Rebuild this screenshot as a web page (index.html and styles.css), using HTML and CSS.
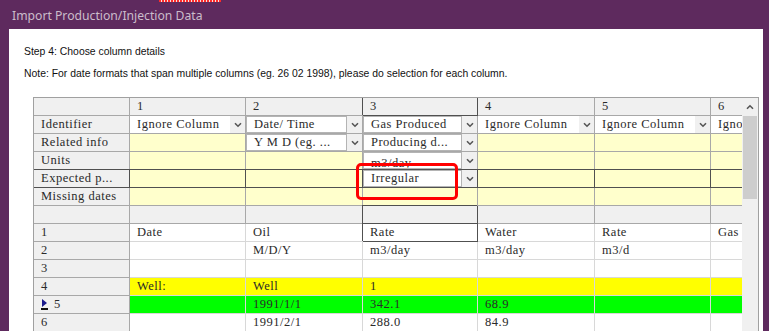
FILE: index.html
```html
<!DOCTYPE html>
<html lang="en">
<head>
  <meta charset="UTF-8">
  <title>Import Production/Injection Data</title>
  <link rel="stylesheet" href="styles.css">
</head>
<body>
  <div class="window">
    <div class="drag-mark"></div>
    <div class="titlebar">Import Production/Injection Data</div>
    <div class="panel">
      <div class="step">Step 4: Choose column details</div>
      <div class="note">Note: For date formats that span multiple columns (eg. 26 02 1998), please do selection for each column.</div>

      <div class="sheet">
        <div class="view">
          <div class="grid">
            <!-- column numbers -->
            <div class="c h"></div>
            <div class="c h">1</div>
            <div class="c h">2</div>
            <div class="c h s">3</div>
            <div class="c h">4</div>
            <div class="c h">5</div>
            <div class="c h">6</div>

            <!-- identifier -->
            <div class="c h">Identifier</div>
            <div class="c w dd"><span class="dd-box">Ignore Column</span><span class="dd-btn"><svg width="8" height="6" viewBox="0 0 8 6"><path d="M1 1.2 L4 4.2 L7 1.2" fill="none" stroke="#555" stroke-width="1.6"/></svg></span></div>
            <div class="c w dd"><span class="dd-box framed">Date/ Time</span><span class="dd-btn"><svg width="8" height="6" viewBox="0 0 8 6"><path d="M1 1.2 L4 4.2 L7 1.2" fill="none" stroke="#555" stroke-width="1.6"/></svg></span></div>
            <div class="c w dd"><span class="dd-box framed">Gas Produced</span><span class="dd-btn"><svg width="8" height="6" viewBox="0 0 8 6"><path d="M1 1.2 L4 4.2 L7 1.2" fill="none" stroke="#555" stroke-width="1.6"/></svg></span></div>
            <div class="c w dd"><span class="dd-box">Ignore Column</span><span class="dd-btn"><svg width="8" height="6" viewBox="0 0 8 6"><path d="M1 1.2 L4 4.2 L7 1.2" fill="none" stroke="#555" stroke-width="1.6"/></svg></span></div>
            <div class="c w dd"><span class="dd-box">Ignore Column</span><span class="dd-btn"><svg width="8" height="6" viewBox="0 0 8 6"><path d="M1 1.2 L4 4.2 L7 1.2" fill="none" stroke="#555" stroke-width="1.6"/></svg></span></div>
            <div class="c w dd"><span class="dd-box">Ignore Column</span><span class="dd-btn"><svg width="8" height="6" viewBox="0 0 8 6"><path d="M1 1.2 L4 4.2 L7 1.2" fill="none" stroke="#555" stroke-width="1.6"/></svg></span></div>

            <!-- related info -->
            <div class="c h">Related info</div>
            <div class="c y"></div>
            <div class="c y dd"><span class="dd-box framed">Y M D (eg. ...</span><span class="dd-btn"><svg width="8" height="6" viewBox="0 0 8 6"><path d="M1 1.2 L4 4.2 L7 1.2" fill="none" stroke="#555" stroke-width="1.6"/></svg></span></div>
            <div class="c y dd"><span class="dd-box framed">Producing d...</span><span class="dd-btn"><svg width="8" height="6" viewBox="0 0 8 6"><path d="M1 1.2 L4 4.2 L7 1.2" fill="none" stroke="#555" stroke-width="1.6"/></svg></span></div>
            <div class="c y"></div>
            <div class="c y"></div>
            <div class="c y"></div>

            <!-- units -->
            <div class="c h">Units</div>
            <div class="c y"></div>
            <div class="c y"></div>
            <div class="c y dd"><span class="dd-box framed low">m3/day</span><span class="dd-btn"><svg width="8" height="6" viewBox="0 0 8 6"><path d="M1 1.2 L4 4.2 L7 1.2" fill="none" stroke="#555" stroke-width="1.6"/></svg></span></div>
            <div class="c y"></div>
            <div class="c y"></div>
            <div class="c y"></div>

            <!-- expected pattern (focused row) -->
            <div class="c h s">Expected p...</div>
            <div class="c y s"></div>
            <div class="c y s"></div>
            <div class="c y s dd mark"><span class="dd-box framed">Irregular</span><span class="dd-btn"><svg width="8" height="6" viewBox="0 0 8 6"><path d="M1 1.2 L4 4.2 L7 1.2" fill="none" stroke="#555" stroke-width="1.6"/></svg></span></div>
            <div class="c y s"></div>
            <div class="c y s"></div>
            <div class="c y s"></div>

            <!-- missing dates -->
            <div class="c h">Missing dates</div>
            <div class="c y"></div>
            <div class="c y"></div>
            <div class="c y"></div>
            <div class="c y"></div>
            <div class="c y"></div>
            <div class="c y"></div>

            <!-- spacer -->
            <div class="c h"></div>
            <div class="c h"></div>
            <div class="c h"></div>
            <div class="c h s"></div>
            <div class="c h"></div>
            <div class="c h"></div>
            <div class="c h"></div>

            <!-- file rows -->
            <div class="c h">1</div>
            <div class="c d">Date</div>
            <div class="c d">Oil</div>
            <div class="c d s">Rate</div>
            <div class="c d">Water</div>
            <div class="c d">Rate</div>
            <div class="c d">Gas</div>

            <div class="c h">2</div>
            <div class="c d"></div>
            <div class="c d">M/D/Y</div>
            <div class="c d">m3/day</div>
            <div class="c d">m3/day</div>
            <div class="c d">m3/d</div>
            <div class="c d"></div>

            <div class="c h">3</div>
            <div class="c d"></div>
            <div class="c d"></div>
            <div class="c d"></div>
            <div class="c d"></div>
            <div class="c d"></div>
            <div class="c d"></div>

            <div class="c h">4</div>
            <div class="c d well">Well:</div>
            <div class="c d well">Well</div>
            <div class="c d well">1</div>
            <div class="c d well"></div>
            <div class="c d well"></div>
            <div class="c d well"></div>

            <div class="c h cur"><svg width="8" height="11" viewBox="0 0 8 11"><path d="M1 0 L6 4 L1 8 Z" fill="#1a1a8c"/><rect x="0" y="9" width="7" height="2" fill="#111"/></svg>5</div>
            <div class="c d data"></div>
            <div class="c d data">1991/1/1</div>
            <div class="c d data">342.1</div>
            <div class="c d data">68.9</div>
            <div class="c d data"></div>
            <div class="c d data"></div>

            <div class="c h">6</div>
            <div class="c d"></div>
            <div class="c d">1991/2/1</div>
            <div class="c d">288.0</div>
            <div class="c d">84.9</div>
            <div class="c d"></div>
            <div class="c d"></div>
          </div>
        </div>

        <div class="scrollbar">
          <div class="sb-arrow"><svg width="8" height="6" viewBox="0 0 8 6"><path d="M1 4.8 L4 1.8 L7 4.8" fill="none" stroke="#555" stroke-width="1.6"/></svg></div>
          <div class="sb-thumb"></div>
          <div class="sb-track"></div>
        </div>
      </div>
    </div>
  </div>
</body>
</html>
```

FILE: styles.css
```css
* {
  margin: 0;
  padding: 0;
  box-sizing: border-box;
}

html, body {
  width: 769px;
  height: 331px;
  overflow: hidden;
}

body {
  background: #5e2a5e;
  font-family: "Liberation Sans", Arial, sans-serif;
}

.window {
  position: relative;
  height: 100%;
}

/* little red/white dashed mark at the top edge */
.drag-mark {
  position: absolute;
  top: 0;
  left: 159px;
  width: 62px;
  height: 2px;
  background: repeating-linear-gradient(90deg, #ff2a2a 0 2px, #f7dede 2px 3px);
}

.titlebar {
  height: 29px;
  padding: 7px 0 0 12px;
  color: #cbbdcb;
  font-family: "Noto Sans", "Open Sans", sans-serif;
  font-size: 12.2px;
  line-height: 17px;
}

.panel {
  margin-left: 9px;
  width: 754px;
  height: 400px;
  background: #ffffff;
  padding: 16px 0 0 15px;
  color: #111;
}

.step,
.note {
  font-size: 10.4px;
  line-height: 14px;
}

.note {
  margin-top: 8px;
}

/* spreadsheet */
.sheet {
  margin: 16px 0 0 9px;
  width: 726px;
  display: flex;
  border: 1px solid #a0a0a0;
  border-bottom: none;
  height: 300px;
}

.view {
  width: 708px;
  overflow: hidden;
}

.grid {
  display: grid;
  grid-template-columns: 96px 116px 117px 115px 117px 116px 116px;
  grid-auto-rows: 18px;
  width: 793px;
  font-family: "Liberation Serif", "Times New Roman", serif;
  font-size: 12.5px;
  letter-spacing: 0.5px;
  color: #2a2a2a;
}

.c {
  border-right: 1px solid #a8a8a8;
  border-bottom: 1px solid #a8a8a8;
  padding: 0 0 0 7px;
  line-height: 17px;
  white-space: nowrap;
  overflow: hidden;
}

.h { background: #f0f0f0; }
.w { background: #ffffff; }
.y { background: #ffffcc; }

.d {
  background: #ffffff;
  border-color: #d8d8d8;
}

.well { background: #ffff00; }
.data { background: #00ff00; }

/* focused cells */
.s {
  border-color: #505050;
  box-shadow: -1px -1px 0 0 #505050;
}

.cur {
  display: flex;
  align-items: center;
  gap: 5px;
}

/* dropdown editors */
.dd {
  display: flex;
  padding: 0;
}

.dd-box {
  flex: 1;
  min-width: 0;
  padding-left: 7px;
  overflow: hidden;
  background: #ffffff;
}

.dd-box.framed {
  border: 1px solid #b4b4b4;
  line-height: 15px;
}

.dd-box.low {
  padding-top: 3px;
  line-height: 15px;
}

.dd-btn {
  width: 15px;
  background: #f0f0f0;
  display: flex;
  align-items: center;
  justify-content: center;
}

.mark {
  position: relative;
  overflow: visible;
}

.mark::after {
  content: "";
  position: absolute;
  left: -7px;
  top: -7px;
  width: 96px;
  height: 31px;
  border: 3px solid #ff0000;
  border-radius: 5px;
}

/* vertical scrollbar */
.scrollbar {
  width: 16px;
  display: flex;
  flex-direction: column;
  background: #f0f0f0;
}

.sb-arrow {
  height: 18px;
  display: flex;
  align-items: center;
  justify-content: center;
}

.sb-thumb {
  height: 83px;
  margin: 0 1px;
  background: #cdcdcd;
}

.sb-track {
  flex: 1;
}
```
